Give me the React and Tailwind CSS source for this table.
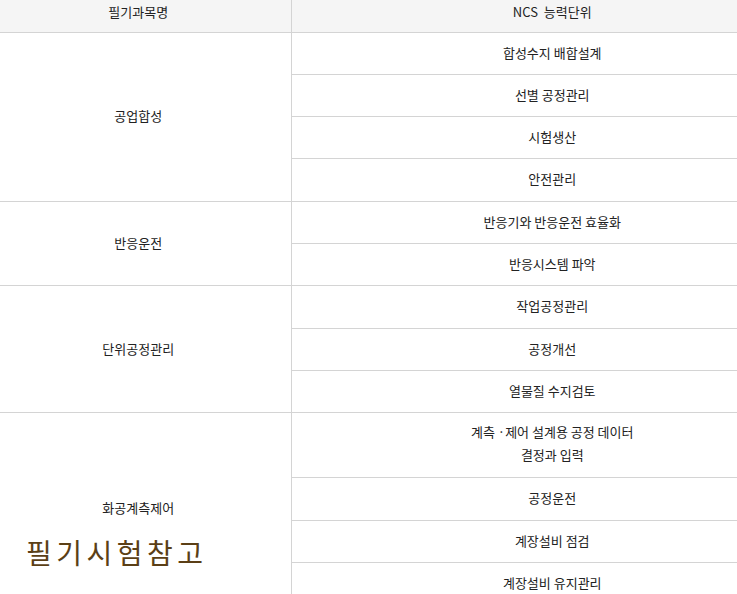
import React from "react";

const groups = [
  { name: "공업합성", items: [["합성수지 배합설계"], ["선별 공정관리"], ["시험생산"], ["안전관리"]] },
  { name: "반응운전", items: [["반응기와 반응운전 효율화"], ["반응시스템 파악"]] },
  { name: "단위공정관리", items: [["작업공정관리"], ["공정개선"], ["열물질 수지검토"]] },
  {
    name: "화공계측제어",
    items: [["계측 ·제어 설계용 공정 데이터", "결정과 입력"], ["공정운전"], ["계장설비 점검"], ["계장설비 유지관리"]],
  },
];

export default function App() {
  return (
    <div
      className="relative w-[737px] h-[594px] overflow-hidden bg-white text-[13px] text-[#222]"
      style={{ fontFamily: '"Noto Sans CJK KR", "Noto Sans", sans-serif' }}
    >
      <table className="-ml-[14px] w-[827px] border-collapse table-fixed">
        <colgroup>
          <col className="w-[305px]" />
          <col />
        </colgroup>
        <thead>
          <tr className="bg-[#f5f5f5]">
            <th className="h-[32px] font-normal text-center border-b border-r border-[#d4d4d4] pb-[9px] leading-[21px]">필기과목명</th>
            <th className="h-[32px] font-normal text-center border-b border-[#d4d4d4] pb-[9px] leading-[21px]">NCS &nbsp;능력단위</th>
          </tr>
        </thead>
        <tbody>
          {groups.map((g) =>
            g.items.map((it, i) => (
              <tr key={g.name + i}>
                {i === 0 && (
                  <td
                    rowSpan={g.items.length}
                    className="text-center align-middle border-b border-r border-[#d4d4d4] pb-[2px] leading-[21.33px]"
                  >
                    {g.name}
                  </td>
                )}
                <td
                  className={
                    "text-center align-middle border-b border-[#d4d4d4] " +
                    (it.length > 1
                      ? "h-[64px] pt-[7px] pb-[11px] leading-[23px]"
                      : "h-[42.33px] pt-[9px] pb-[11px] leading-[21.33px]")
                  }
                >
                  {it.map((l, k) => (
                    <div key={k}>{l}</div>
                  ))}
                </td>
              </tr>
            ))
          )}
        </tbody>
      </table>
      <div className="absolute left-[26px] top-[532px] text-[28px] tracking-[4.5px] text-[#5b3f16] leading-[40px]">
        필기시험참고
      </div>
    </div>
  );
}
